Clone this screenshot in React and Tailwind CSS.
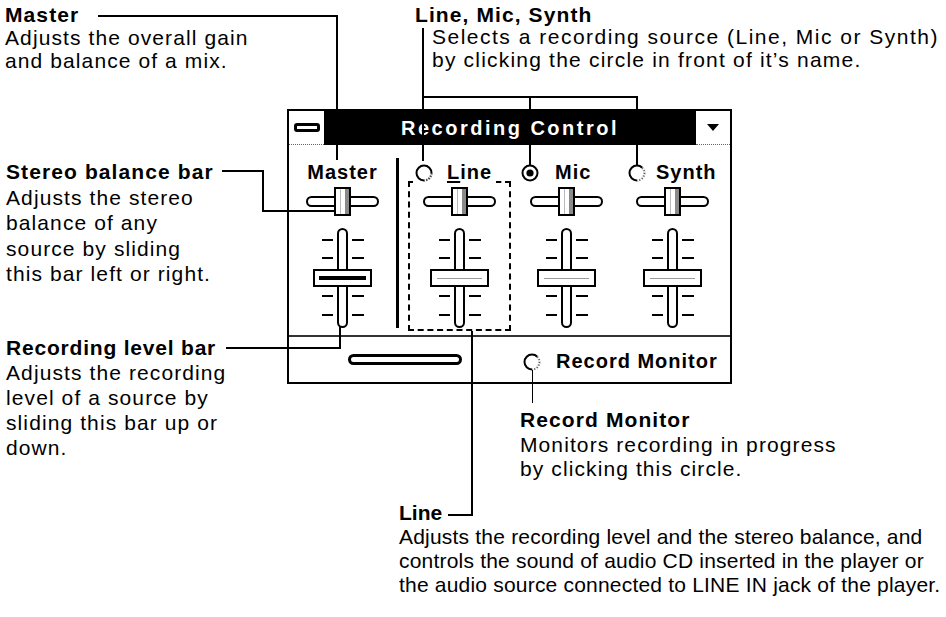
import React from "react";

function Radio({ kind }) {
  return (
    <svg width="18" height="18" viewBox="0 0 18 18" className="shrink-0">
      <circle cx="9" cy="9" r="7.5" fill="white" stroke="black" strokeWidth="2" />
      {kind === "line" && (
        <>
          <path d="M16.5 9 A7.5 7.5 0 0 1 9 16.5" fill="none" stroke="white" strokeWidth="2.6" />
          <path d="M16.5 9 A7.5 7.5 0 0 1 9 16.5" fill="none" stroke="#444" strokeWidth="2" strokeDasharray="1.5 1.2" />
        </>
      )}
      {(kind === "synth" || kind === "rm") && (
        <>
          <path d="M14.3 3.7 A7.5 7.5 0 0 1 9 16.5" fill="none" stroke="white" strokeWidth="2.6" />
          <path d="M14.3 3.7 A7.5 7.5 0 0 1 9 16.5" fill="none" stroke="#555" strokeWidth="1.6" strokeDasharray="1.2 1.6" />
        </>
      )}
      {kind === "mic" && <circle cx="9" cy="9" r="3.6" fill="black" />}
    </svg>
  );
}

function Balance() {
  return (
    <div className="relative w-[73px] h-[29px] mt-[3px] flex items-center">
      <div className="w-full h-[11px] rounded-full border-2 border-black bg-white" />
      <div className="absolute left-[28px] top-0 w-[17px] h-[29px] border-2 border-black bg-white flex justify-between">
        <div className="ml-[4px] w-[1px] h-full bg-[#bbb]" />
        <div className="w-[4px] h-full bg-[#8a8a8a]" />
      </div>
    </div>
  );
}

function Fader({ master }) {
  return (
    <div className="relative w-[59px] h-[100px] mt-[12px] flex justify-center">
      <div className="w-[11px] h-full rounded-full border-2 border-black bg-white" />
      <div className="absolute left-[9px] top-[11px] w-[11px] h-[2px] bg-black" />
      <div className="absolute left-[9px] top-[29px] w-[11px] h-[2px] bg-black" />
      <div className="absolute left-[9px] top-[67px] w-[11px] h-[2px] bg-black" />
      <div className="absolute left-[9px] top-[86px] w-[11px] h-[2px] bg-black" />
      <div className="absolute left-[39px] top-[11px] w-[12px] h-[2px] bg-black" />
      <div className="absolute left-[39px] top-[29px] w-[12px] h-[2px] bg-black" />
      <div className="absolute left-[39px] top-[67px] w-[12px] h-[2px] bg-black" />
      <div className="absolute left-[39px] top-[86px] w-[12px] h-[2px] bg-black" />
      <div className="absolute left-0 top-[41px] w-[59px] h-[18px] border-2 border-black bg-white flex items-center justify-center">
        {master ? (
          <div className="w-[47px] h-[4px] bg-black" />
        ) : (
          <div className="w-[45px] h-[1px] bg-[#9a9a9a]" />
        )}
      </div>
    </div>
  );
}

function RecordingWindow() {
  return (
    <div className="absolute left-[287px] top-[109px] w-[445px] h-[275px] border-2 border-black bg-white flex flex-col">
      {/* title bar */}
      <div className="h-[34px] bg-black flex items-stretch">
        <div className="w-[35px] bg-white border-b border-dotted border-[#666] flex items-center justify-center">
          <div className="w-[26px] h-[9px] border-[3px] border-black rounded-[3px] bg-white" />
        </div>
        <div className="flex-1 text-center text-white font-bold text-[20px] leading-[34px] tracking-[2.5px]">
          Recording Control
        </div>
        <div className="w-[34px] bg-white border-b border-dotted border-[#666] flex items-center justify-center">
          <svg width="12" height="7" viewBox="0 0 12 7">
            <path d="M0 0 H12 L6 7 Z" fill="black" />
          </svg>
        </div>
      </div>

      {/* columns */}
      <div className="h-[190px] flex">
        {/* Master */}
        <div className="w-[107px] flex flex-col items-center">
          <div className="mt-[16px] h-[23px] flex items-center font-bold text-[20px] tracking-[1px] leading-[23px]">
            Master
          </div>
          <Balance />
          <Fader master />
        </div>
        <div className="w-[3px] h-[170px] mt-[13px] bg-black" />
        {/* Line */}
        <div className="relative ml-[6px] w-[108px] flex flex-col items-center">
          <div className="absolute left-[3px] top-[36px] w-[103px] h-[150px] border-2 border-dashed border-black" />
          <div className="relative z-10 mt-[16px] h-[23px] self-start ml-[8px] pl-[2px] pr-[4px] bg-white flex items-center">
            <Radio kind="line" />
            <span className="ml-[14px] font-bold text-[20px] tracking-[1px] leading-[23px]">
              <span className="underline underline-offset-2">L</span>ine
            </span>
          </div>
          <Balance />
          <Fader />
        </div>
        {/* Mic */}
        <div className="w-[106px] flex flex-col items-center">
          <div className="mt-[16px] h-[23px] self-start ml-[8px] flex items-center">
            <Radio kind="mic" />
            <span className="ml-[16px] font-bold text-[20px] tracking-[1px] leading-[23px]">Mic</span>
          </div>
          <Balance />
          <Fader />
        </div>
        {/* Synth */}
        <div className="w-[106px] flex flex-col items-center">
          <div className="mt-[16px] h-[23px] self-start ml-[9px] flex items-center">
            <Radio kind="synth" />
            <span className="ml-[10px] font-bold text-[20px] tracking-[1px] leading-[23px]">Synth</span>
          </div>
          <Balance />
          <Fader />
        </div>
      </div>

      <div className="h-[2px] bg-[#333]" />

      {/* bottom */}
      <div className="flex-1 flex items-center">
        <div className="ml-[59px] w-[114px] h-[11px] rounded-full border-[3px] border-black bg-white" />
        <div className="ml-[61px] mt-[4px] flex items-center">
          <Radio kind="rm" />
          <span className="ml-[15px] font-bold text-[20px] tracking-[1px] leading-[23px]">Record Monitor</span>
        </div>
      </div>
    </div>
  );
}

const ann = "absolute text-[21px] text-black whitespace-nowrap";

export default function App() {
  return (
    <div className="relative w-[946px] h-[617px] overflow-hidden bg-white text-black font-['Liberation_Sans',Arial,sans-serif]">
      {/* annotations */}
      <div className={`${ann} left-[5px] top-[3px] leading-[23px] tracking-[1.1px]`}>
        <div className="font-bold">Master</div>
        <div>Adjusts the overall gain</div>
        <div>and balance of a mix.</div>
      </div>

      <div className={`${ann} left-[415px] top-[5px] leading-[20px] tracking-[1.1px] font-bold`}>Line, Mic, Synth</div>
      <div className={`${ann} left-[432px] top-[25px] leading-[23px] tracking-[1.5px]`}>
        <div>Selects a recording source (Line, Mic or Synth)</div>
        <div className="tracking-[1.2px]">by clicking the circle in front of it’s name.</div>
      </div>

      <div className={`${ann} left-[6px] top-[159px] leading-[25.5px] tracking-[1.1px]`}>
        <div className="font-bold">Stereo balance bar</div>
        <div>Adjusts the stereo</div>
        <div>balance of any</div>
        <div>source by sliding</div>
        <div>this bar left or right.</div>
      </div>

      <div className={`${ann} left-[6px] top-[335px] leading-[25px] tracking-[1.1px]`}>
        <div className="font-bold tracking-[0.8px]">Recording level bar</div>
        <div>Adjusts the recording</div>
        <div>level of a source by</div>
        <div>sliding this bar up or</div>
        <div>down.</div>
      </div>

      <div className={`${ann} left-[520px] top-[408px] leading-[24.5px] tracking-[1.1px]`}>
        <div className="font-bold">Record Monitor</div>
        <div>Monitors recording in progress</div>
        <div>by clicking this circle.</div>
      </div>

      <div className={`${ann} left-[399px] top-[501px] leading-[24px] tracking-[0.2px]`}>
        <div className="font-bold tracking-[0px]">Line</div>
        <div>Adjusts the recording level and the stereo balance, and</div>
        <div>controls the sound of audio CD inserted in the player or</div>
        <div>the audio source connected to LINE IN jack of the player.</div>
      </div>

      <RecordingWindow />

      {/* callout lines */}
      <div className="absolute left-[98px] top-[15px] w-[240px] h-[2px] bg-black" />
      <div className="absolute left-[336px] top-[15px] w-[2px] h-[145px] bg-black" />

      <div className="absolute left-[422px] top-[28px] w-[2px] h-[137px] bg-black" />
      <div className="absolute left-[422px] top-[96px] w-[216px] h-[2px] bg-black" />
      <div className="absolute left-[529px] top-[96px] w-[2px] h-[69px] bg-black" />
      <div className="absolute left-[636px] top-[96px] w-[2px] h-[69px] bg-black" />

      <div className="absolute left-[222px] top-[170px] w-[42px] h-[2px] bg-black" />
      <div className="absolute left-[262px] top-[170px] w-[2px] h-[42px] bg-black" />
      <div className="absolute left-[262px] top-[210px] w-[74px] h-[2px] bg-black" />

      <div className="absolute left-[226px] top-[347px] w-[115px] h-[2px] bg-black" />
      <div className="absolute left-[339px] top-[327px] w-[2px] h-[22px] bg-black" />

      <div className="absolute left-[471px] top-[331px] w-[2px] h-[185px] bg-black" />
      <div className="absolute left-[448px] top-[514px] w-[25px] h-[2px] bg-black" />

      <div className="absolute left-[532px] top-[370px] w-[1px] h-[33px] bg-black" />
    </div>
  );
}
